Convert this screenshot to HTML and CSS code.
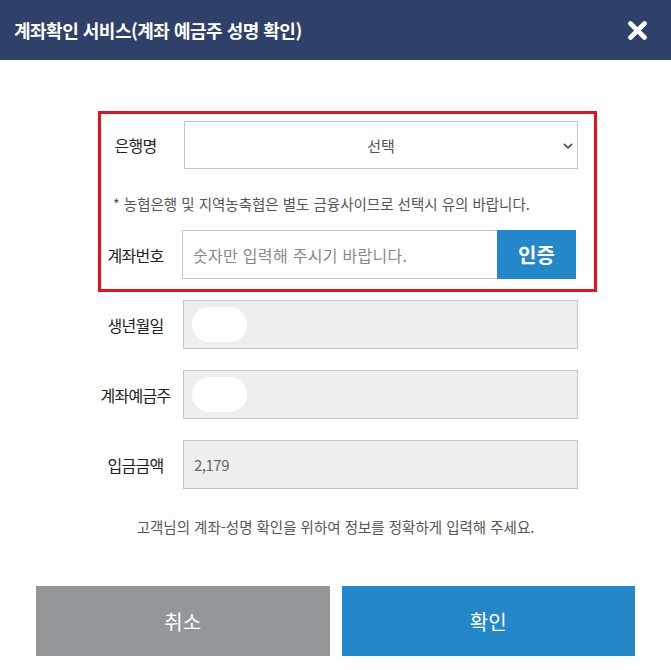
FILE: index.html
```html
<!DOCTYPE html>
<html lang="ko">
<head>
    <meta charset="UTF-8">
    <meta name="viewport" content="width=device-width, initial-scale=1.0">
    <title>계좌확인 서비스</title>
    <link rel="stylesheet" href="styles.css">
</head>
<body>

<div class="popup">
    <!-- Header -->
    <div class="popup-head">
        <h2>계좌확인 서비스(계좌 예금주 성명 확인)</h2>
        <button class="btn-close" type="button">
            <svg width="19" height="19" viewBox="0 0 19 19">
                <path d="M2.5 2.5 L16.5 16.5 M16.5 2.5 L2.5 16.5" stroke="#fff" stroke-width="4.6" stroke-linecap="round"/>
            </svg>
        </button>
    </div>

    <div class="popup-body">
        <div class="form">
            <!-- Account check area -->
            <div class="check-box">
                <div class="row">
                    <label class="row-label">은행명</label>
                    <div class="select-wrap">
                        <select class="bank-select">
                            <option>선택</option>
                        </select>
                        <svg class="chevron" width="10" height="6" viewBox="0 0 10 6">
                            <path d="M1 1 L5 4.8 L9 1" fill="none" stroke="#555" stroke-width="1.8"/>
                        </svg>
                    </div>
                </div>
                <p class="notice">* 농협은행 및 지역농축협은 별도 금융사이므로 선택시 유의 바랍니다.</p>
                <div class="row row-account">
                    <label class="row-label">계좌번호</label>
                    <input class="account-input" type="text" placeholder="숫자만 입력해 주시기 바랍니다.">
                    <button class="btn-auth" type="button">인증</button>
                </div>
            </div>

            <!-- Result fields -->
            <div class="result">
                <div class="row">
                    <label class="row-label">생년월일</label>
                    <div class="field"><span class="mask"></span></div>
                </div>
                <div class="row">
                    <label class="row-label">계좌예금주</label>
                    <div class="field"><span class="mask"></span></div>
                </div>
                <div class="row">
                    <label class="row-label">입금금액</label>
                    <div class="field">2,179</div>
                </div>
            </div>
        </div>

        <p class="guide">고객님의 계좌-성명 확인을 위하여 정보를 정확하게 입력해 주세요.</p>

        <div class="btns">
            <button class="btn btn-cancel" type="button">취소</button>
            <button class="btn btn-ok" type="button">확인</button>
        </div>
    </div>
</div>

</body>
</html>
```

FILE: styles.css
```css
body {
    margin: 0;
    padding: 0;
    background: #fff;
    font-family: "Noto Sans CJK KR", "Noto Sans", sans-serif;
    color: #333;
}

.popup {
    width: 671px;
    height: 670px;
    background: #fff;
}

/* Header */
.popup-head {
    height: 60px;
    background-color: #2f4169;
    display: flex;
    align-items: center;
    justify-content: space-between;
    padding: 0 24px 0 14px;
}

.popup-head h2 {
    margin: 0;
    color: #fff;
    font-size: 18px;
    font-weight: bold;
    letter-spacing: -0.5px;
}

.btn-close {
    display: flex;
    padding: 0;
    border: none;
    background: none;
    cursor: pointer;
}

/* Body */
.popup-body {
    padding-top: 51px;
}

.form {
    width: 499px;
    margin-left: 98px;
}

.check-box {
    border: 3px solid #e3131b;
    padding: 7px 16px 10px 0;
}

.row {
    display: flex;
    align-items: center;
}

/* long labels spill evenly to both sides */
.row-label {
    width: 69px;
    flex-shrink: 0;
    display: flex;
    justify-content: center;
    white-space: nowrap;
    font-size: 16px;
    color: #222;
    letter-spacing: -0.7px;
}

.select-wrap {
    position: relative;
    flex: 1;
    margin-left: 14px;
}

.bank-select {
    display: block;
    width: 100%;
    height: 48px;
    border: 1px solid #c8c8c8;
    background: #fff;
    appearance: none;
    -webkit-appearance: none;
    text-align: center;
    text-align-last: center;
    font-family: inherit;
    font-size: 15px;
    color: #555;
}

.chevron {
    position: absolute;
    right: 5px;
    top: 22px;
}

.notice {
    margin: 25px 0 16px 12px;
    font-size: 14.5px;
    line-height: 20px;
    color: #555;
}

.row-account {
    margin-right: 2px;
}

.account-input {
    flex: 1;
    height: 49px;
    box-sizing: border-box;
    margin-left: 12px;
    border: 1px solid #c8c8c8;
    border-right: none;
    padding: 0 10px;
    font-family: inherit;
    font-size: 16px;
    letter-spacing: 0.3px;
    color: #333;
}

.account-input::placeholder {
    color: #888;
}

.btn-auth {
    width: 79px;
    height: 49px;
    border: none;
    background-color: #2387c9;
    color: #fff;
    font-family: inherit;
    font-size: 20px;
    font-weight: bold;
    cursor: pointer;
}

/* Result fields */
.result {
    padding: 8px 19px 0 3px;
    display: flex;
    flex-direction: column;
    gap: 21px;
}

.field {
    flex: 1;
    height: 49px;
    box-sizing: border-box;
    margin-left: 13px;
    border: 1px solid #c6c6c6;
    background-color: #eee;
    display: flex;
    align-items: center;
    padding-left: 10px;
    font-size: 15px;
    color: #666;
    letter-spacing: -0.5px;
}

.mask {
    width: 55px;
    height: 35px;
    margin-left: -2px;
    border-radius: 18px;
    background-color: #fff;
}

.guide {
    margin: 28px 0 0;
    text-align: center;
    font-size: 14.5px;
    line-height: 20px;
    color: #555;
}

/* Bottom buttons */
.btns {
    display: flex;
    gap: 12px;
    margin: 49px 36px 0;
}

.btn {
    flex: 1;
    height: 70px;
    border: none;
    color: #fff;
    font-family: inherit;
    font-size: 20px;
    cursor: pointer;
}

.btn-cancel {
    background-color: #939799;
}

.btn-ok {
    background-color: #2387c9;
}
```
